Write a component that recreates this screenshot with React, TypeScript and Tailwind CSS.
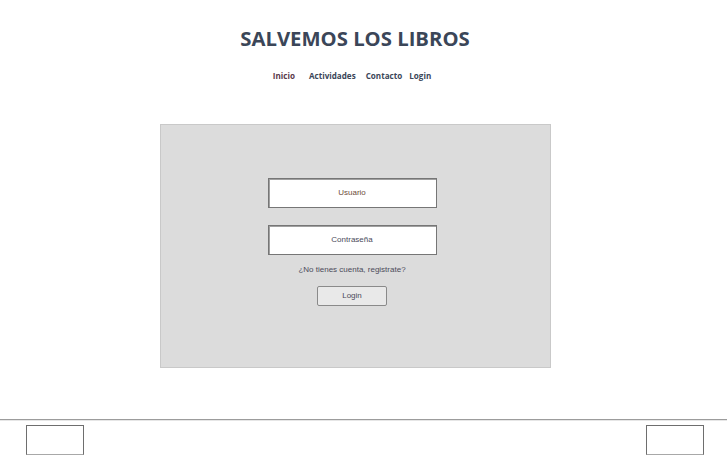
import React from "react";

export default function App() {
  const sans = { fontFamily: '"Open Sans", "Noto Sans", sans-serif' };
  const arial = { fontFamily: '"Liberation Sans", Arial, sans-serif' };
  return (
    <div className="w-[727px] h-[457px] bg-white overflow-hidden relative">
      <div className="w-[710px]">
        <h1
          className="pt-[23px] h-[52px] text-center text-[20.3px] leading-[30px] font-bold text-[#3b4658]"
          style={sans}
        >
          SALVEMOS LOS LIBROS
        </h1>
        <nav
          className="mt-[18px] pr-[6px] flex justify-center text-[8.1px] leading-[12px] font-bold text-[#3b4658]"
          style={sans}
        >
          <span className="text-[#5a3a4a]">Inicio</span>
          <span className="ml-[14px]">Actividades</span>
          <span className="ml-[10px]">Contacto</span>
          <span className="ml-[7px]">Login</span>
        </nav>
        <div className="mt-[42px] mx-auto w-[391px] h-[244px] bg-[#dcdcdc] border border-[#c9c9c9] flex flex-col items-center pt-[53px] pr-[6px]" style={arial}>
          <div className="w-[169px] h-[30px] bg-white border border-[#767676] shadow-[inset_1px_1px_0_#a0a0a0] flex items-center justify-center text-[8px] text-[#6e4c3a]">
            Usuario
          </div>
          <div className="mt-[17px] w-[169px] h-[30px] bg-white border border-[#767676] shadow-[inset_1px_1px_0_#a0a0a0] flex items-center justify-center text-[8px] text-[#4a4a5a]">
            Contraseña
          </div>
          <div className="mt-[9px] text-[8px] leading-[12px] text-[#4b4b5a]">¿No tienes cuenta, registrate?</div>
          <div className="mt-[10px] w-[70px] h-[20px] bg-[#e9e9e9] border border-[#8a8a8a] rounded-[2px] flex items-center justify-center text-[8px] text-[#4a4a5a]">
            Login
          </div>
        </div>
      </div>
      <div className="absolute left-0 top-[419px] w-[727px] border-t border-[#9c9c9c] border-b border-b-[#e6e6e6]" />
      <div className="absolute top-[425px] left-[26px] w-[58px] h-[30px] border border-[#6e6e6e] border-b-[#a8a8a8]" />
      <div className="absolute top-[425px] left-[646px] w-[58px] h-[30px] border border-[#6e6e6e] border-b-[#a8a8a8]" />
    </div>
  );
}
